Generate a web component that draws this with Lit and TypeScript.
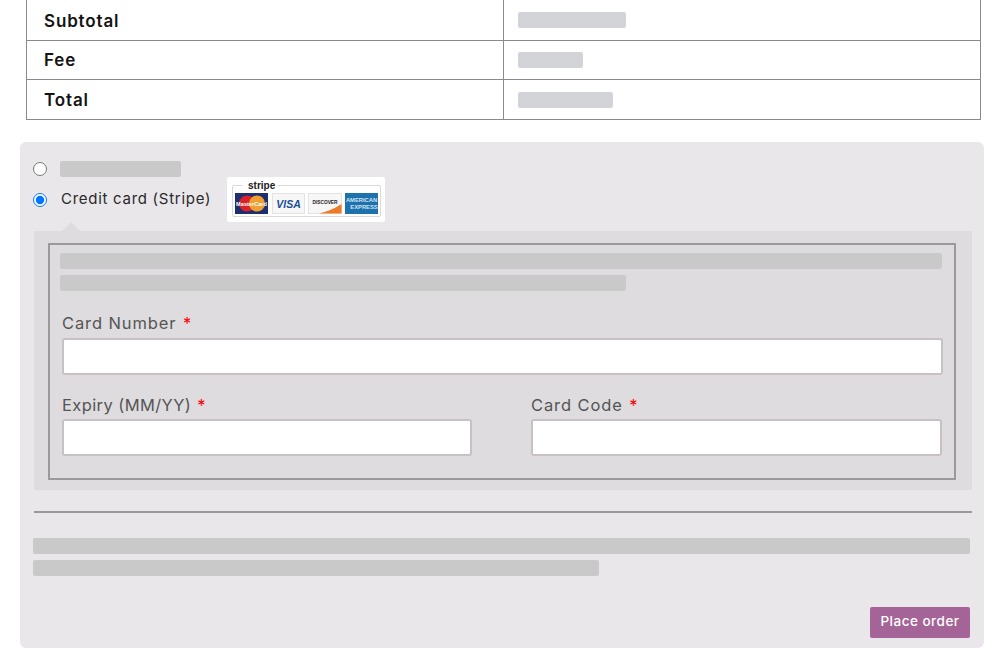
import { LitElement, html, css, svg } from "lit";
import { customElement } from "lit/decorators.js";

@customElement("app-root")
export class AppRoot extends LitElement {
  static styles = css`
    :host { display: block; width: 1000px; height: 667px; overflow: hidden; background: #fff;
      font-family: Inter, "Open Sans", sans-serif; color: #111; }
    * { box-sizing: border-box; }
    .table { margin: 0 19px 0 26px; width: 955px; border-left: 1px solid #8a8a8a; border-right: 1px solid #8a8a8a; }
    .row { display: grid; grid-template-columns: 477px 1fr; border-bottom: 1px solid #8a8a8a; align-items: stretch; }
    .row.r1 { height: 41px; } .row.r2 { height: 39px; } .row.r3 { height: 40px; }
    .row.r1 .th { padding-top: 2px; }
    .th { padding-left: 17px; display: flex; align-items: center; font-size: 17px; font-weight: 600; letter-spacing: 0.85px; color: #141414; border-right: 1px solid #8a8a8a; }
    .td { padding-left: 14px; display: flex; align-items: center; }
    .sk { display: block; height: 16px; border-radius: 2px; background: #c9c9c9; }
    .td .sk { background: #d2d4d8; }
    .box { margin: 22px 16px 0 20px; width: 964px; height: 506px; background: #e9e7ea; border-radius: 6px; padding: 0 14px 0 14px; display: flow-root; }
    .opt { display: flex; align-items: center; }
    .opt1 { margin-top: 19px; height: 16px; }
    .opt2 { margin-top: 0; height: 45px; }
    .opt input { margin: 0; width: 14px; height: 14px; margin-left: -1px; flex: none; }
    .opt1 .sk { margin-left: 13px; }
    .opt2 label { margin: 0 0 2px 14px; font-size: 15px; letter-spacing: 0.72px; color: #2a2a2a; width: 166px; white-space: nowrap; }
    .logo { width: 158px; height: 45px; background: #fff; border-radius: 2px; flex: none; display: block; }
    .notch { width: 0; height: 0; margin-left: 28px; border-left: 9px solid transparent; border-right: 9px solid transparent; border-bottom: 9px solid #dedcdf; }
    .panel { background: #dedcdf; height: 259px; width: 938px; padding: 12px 16px 10px 14px; }
    .fs { border: 2px solid #9b9999; height: 237px; padding: 8px 12px 0 10px; }
    .sk2 { margin-top: 6px; }
    .label { display: block; font-size: 16.5px; line-height: 20px; letter-spacing: 0.9px; color: #555; white-space: nowrap; }
    .label.tight { letter-spacing: 0.4px; }
    .label b { font-weight: 400; color: #f00; margin-left: 1px; }
    .f1 { margin: 22px -1px 0 2px; }
    .inp { display: block; margin-top: 5px; width: 100%; height: 37px; padding: 0; background: #fff; border: 2px solid #c7c1c6; border-radius: 3px; }
    .two { margin: 20px 0 0 2px; display: grid; grid-template-columns: 410px 411px; column-gap: 59px; }
    .two .inp { margin-top: 4px; }
    hr { margin: 21px 0 0; height: 2px; border: 0; background: #9b9999; width: 938px; }
    .sk3 { margin: 25px 0 0 -1px; width: 937px; }
    .sk4 { margin: 6px 0 0 -1px; width: 566px; }
    .actions { display: flex; justify-content: flex-end; margin: 31px 0 0; width: 936px; }
    button { width: 100px; height: 31px; border: 0; border-radius: 2px; background: #a46497; color: #fff; font: 500 13.5px Inter, "Open Sans", sans-serif; letter-spacing: 0.5px; padding: 0 0 3px; }
  `;

  private card(x: number, content: unknown) {
    return svg`<g transform="translate(${x} 16)">${content}</g>`;
  }

  private logo() {
    return html`<svg class="logo" viewBox="0 0 158 45" width="158" height="45" aria-hidden="true">
      <rect x="5.5" y="8.5" width="148" height="31" rx="1.5" fill="none" stroke="#d9d9d9"/>
      <rect x="15" y="3" width="36" height="10" fill="#fff"/>
      <text x="21" y="12" font-family="'Liberation Sans', sans-serif" font-weight="700" font-size="10" fill="#222">stripe</text>
      ${this.card(8, svg`
        <rect width="33" height="21" fill="#1d2f6f"/>
        <circle cx="12" cy="10.5" r="8" fill="#d9222a"/>
        <circle cx="22" cy="10.5" r="8" fill="#f0a030"/>
        <text x="16.5" y="12.5" text-anchor="middle" font-family="'Liberation Sans', sans-serif" font-weight="700" font-size="5.6" fill="#fff">MasterCard</text>`)}
      ${this.card(45, svg`
        <rect x=".5" y=".5" width="32" height="20" fill="#f7f7f7" stroke="#e3e3e3"/>
        <text x="16.5" y="15" text-anchor="middle" font-family="'Liberation Sans', sans-serif" font-weight="700" font-style="italic" font-size="10.5" fill="#1a4f95">VISA</text>`)}
      ${this.card(81, svg`
        <rect x=".5" y=".5" width="33" height="20" fill="#f7f7f7" stroke="#e3e3e3"/>
        <path d="M11 20.5 L33.5 20.5 L33.5 11 Q24 17.5 11 20.5Z" fill="#ee7a23"/>
        <text x="17" y="11" text-anchor="middle" font-family="'Liberation Sans', sans-serif" font-weight="700" font-size="4.8" fill="#222">DISCOVER</text>`)}
      ${this.card(118, svg`
        <rect width="33" height="21" fill="#1d72ae"/>
        <text x="16.5" y="8.5" text-anchor="middle" font-family="'Liberation Sans', sans-serif" font-weight="700" font-size="5.8" fill="#cfe4f3">AMERICAN</text>
        <text x="19" y="16" text-anchor="middle" font-family="'Liberation Sans', sans-serif" font-weight="700" font-size="5.8" fill="#cfe4f3">EXPRESS</text>`)}
    </svg>`;
  }

  render() {
    return html`
      <div class="table">
        <div class="row r1"><div class="th">Subtotal</div><div class="td"><span class="sk" style="width:108px"></span></div></div>
        <div class="row r2"><div class="th">Fee</div><div class="td"><span class="sk" style="width:65px"></span></div></div>
        <div class="row r3"><div class="th">Total</div><div class="td"><span class="sk" style="width:95px"></span></div></div>
      </div>
      <div class="box">
        <div class="opt opt1"><input type="radio" name="pay" /><span class="sk" style="width:121px"></span></div>
        <div class="opt opt2"><input type="radio" name="pay" checked /><label>Credit card (Stripe)</label>${this.logo()}</div>
        <div class="notch"></div>
        <div class="panel">
          <div class="fs">
            <span class="sk" style="width:882px"></span>
            <span class="sk sk2" style="width:566px"></span>
            <div class="f1">
              <span class="label">Card Number <b>*</b></span>
              <span class="inp"></span>
            </div>
            <div class="two">
              <div><span class="label tight">Expiry (MM/YY) <b>*</b></span><span class="inp"></span></div>
              <div><span class="label">Card Code <b>*</b></span><span class="inp"></span></div>
            </div>
          </div>
        </div>
        <hr />
        <span class="sk sk3"></span>
        <span class="sk sk4"></span>
        <div class="actions"><button>Place order</button></div>
      </div>
    `;
  }
}
